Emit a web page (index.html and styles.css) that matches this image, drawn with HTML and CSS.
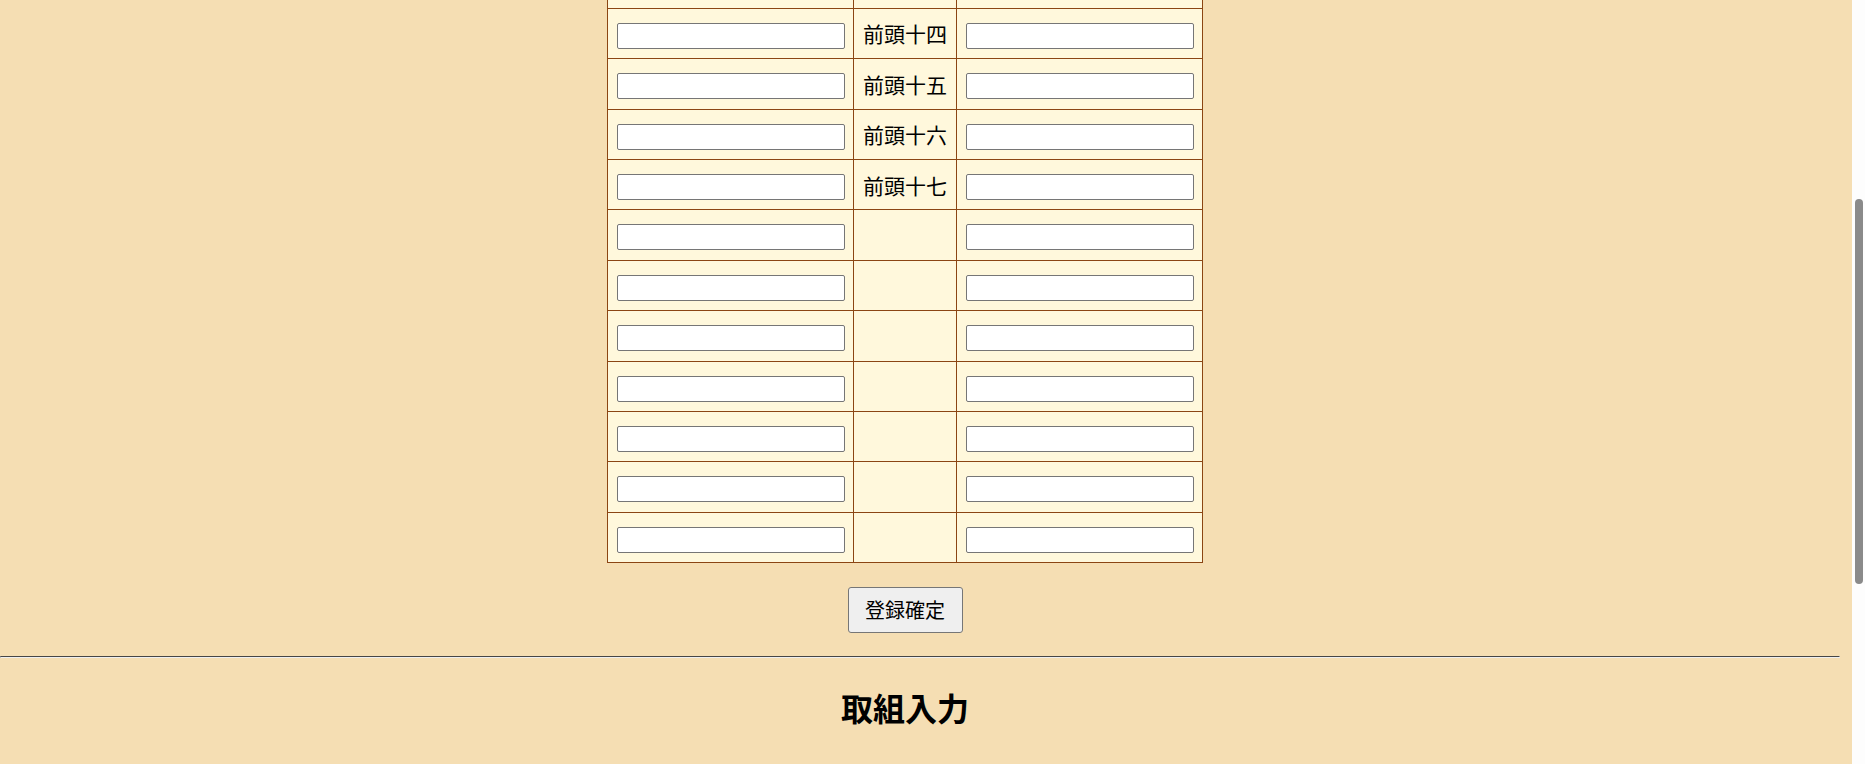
FILE: index.html
```html
<!DOCTYPE html>
<html lang="ja">
<head>
    <meta charset="UTF-8">
    <meta name="viewport" content="width=device-width, initial-scale=1.0">
    <title>番付・取組入力</title>
    <link rel="stylesheet" href="styles.css">
</head>
<body>
    <section class="panel">
        <h2>番付入力</h2>
        <form id="banzukeForm">
            <table class="banzuke">
                <thead>
                    <tr>
                        <th>東</th>
                        <th>番付</th>
                        <th>西</th>
                    </tr>
                </thead>
                <tbody>
                    <tr>
                        <td><input type="text"></td>
                        <td class="rank">前頭十二</td>
                        <td><input type="text"></td>
                    </tr>
                    <tr>
                        <td><input type="text"></td>
                        <td class="rank">前頭十三</td>
                        <td><input type="text"></td>
                    </tr>
                    <tr id="firstVisible">
                        <td><input type="text"></td>
                        <td class="rank">前頭十四</td>
                        <td><input type="text"></td>
                    </tr>
                    <tr>
                        <td><input type="text"></td>
                        <td class="rank">前頭十五</td>
                        <td><input type="text"></td>
                    </tr>
                    <tr>
                        <td><input type="text"></td>
                        <td class="rank">前頭十六</td>
                        <td><input type="text"></td>
                    </tr>
                    <tr>
                        <td><input type="text"></td>
                        <td class="rank">前頭十七</td>
                        <td><input type="text"></td>
                    </tr>
                    <tr>
                        <td><input type="text"></td>
                        <td class="rank"></td>
                        <td><input type="text"></td>
                    </tr>
                    <tr>
                        <td><input type="text"></td>
                        <td class="rank"></td>
                        <td><input type="text"></td>
                    </tr>
                    <tr>
                        <td><input type="text"></td>
                        <td class="rank"></td>
                        <td><input type="text"></td>
                    </tr>
                    <tr>
                        <td><input type="text"></td>
                        <td class="rank"></td>
                        <td><input type="text"></td>
                    </tr>
                    <tr>
                        <td><input type="text"></td>
                        <td class="rank"></td>
                        <td><input type="text"></td>
                    </tr>
                    <tr>
                        <td><input type="text"></td>
                        <td class="rank"></td>
                        <td><input type="text"></td>
                    </tr>
                    <tr>
                        <td><input type="text"></td>
                        <td class="rank"></td>
                        <td><input type="text"></td>
                    </tr>
                </tbody>
            </table>
            <div class="actions">
                <button type="submit">登録確定</button>
            </div>
        </form>
    </section>

    <hr>

    <section class="panel">
        <h2>取組入力</h2>
        <form id="torikumiForm">
            <table class="banzuke">
                <tbody>
                    <tr>
                        <td><input type="text"></td>
                        <td class="rank">対</td>
                        <td><input type="text"></td>
                    </tr>
                    <tr>
                        <td><input type="text"></td>
                        <td class="rank">対</td>
                        <td><input type="text"></td>
                    </tr>
                </tbody>
            </table>
            <div class="actions">
                <button type="submit">取組登録</button>
            </div>
        </form>
    </section>

    <!-- scrollbar strip, drawn by hand -->
    <aside class="scrollbar" aria-hidden="true">
        <div class="scrollbar-thumb"></div>
    </aside>

    <script>
        // keep the lower part of the banzuke in view
        const firstRow = document.getElementById('firstVisible');
        window.scrollTo(0, firstRow.getBoundingClientRect().top + window.scrollY - 8);
    </script>
</body>
</html>
```

FILE: styles.css
```css
html {
    background-color: #f5deb3;
}

body {
    margin: 0 13px 0 0;
    font-family: "Noto Sans CJK JP", sans-serif;
    color: #000;
}

.panel {
    margin-right: 42px;
    text-align: center;
}

h2 {
    font-size: 32px;
    font-weight: bold;
    margin: 26px 0;
}

.banzuke {
    margin: 0 auto;
    border-collapse: collapse;
    background-color: #fff8dc;
    border: 1px solid #8b4513;
}

.banzuke th,
.banzuke td {
    border: 1px solid #8b4513;
    padding: 14px 8px 9.4px 9px;
}

.banzuke th {
    font-size: 21px;
    padding: 8px;
}

.banzuke td.rank {
    width: 84px;
    padding: 0 9px;
    font-size: 21px;
    white-space: nowrap;
}

.banzuke input {
    display: block;
    box-sizing: border-box;
    width: 228px;
    height: 26px;
    margin: 0;
    padding: 1px 4px;
    font-size: 16px;
    background: #fff;
    border: 1px solid #767676;
    border-radius: 2px;
}

.actions {
    margin-top: 24px;
}

.actions button {
    font-family: "Noto Sans CJK JP", sans-serif;
    font-size: 20px;
    line-height: 28px;
    padding: 8px 16.5px;
    background: #efefef;
    color: #000;
    border: 1px solid #767676;
    border-radius: 3px;
    cursor: pointer;
}

.actions button:hover {
    background: #e5e5e5;
}

hr {
    margin: 23px 12px 0 0;
    border: 1px inset #eee;
    border-top-color: #9a9a9a;
}

#torikumiForm {
    margin-top: 56px;
    padding-bottom: 120px;
}

.scrollbar {
    position: fixed;
    top: 0;
    right: 0;
    bottom: 0;
    width: 13px;
    background: #fdfdfd;
}

.scrollbar-thumb {
    width: 8px;
    height: 385px;
    margin: 199px 0 0 3px;
    background: #8a8a8a;
    border-radius: 4px;
}
```
